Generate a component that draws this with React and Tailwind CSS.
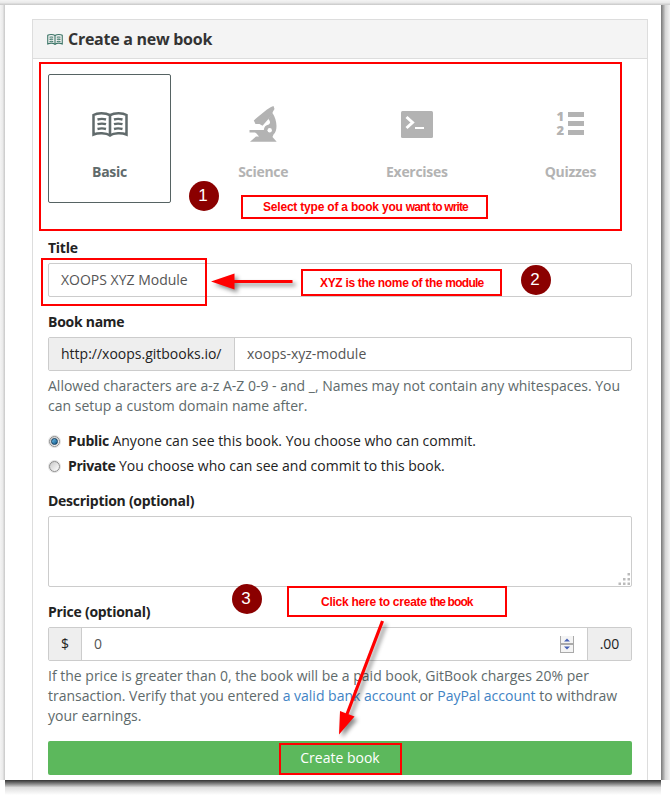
import React from "react";

function BookIcon({ className }) {
  return (
    <svg className={className} viewBox="0 0 36 25" fill="none" stroke="currentColor">
      <path d="M1.500 22.500V3C5 .8 13.500 .6 18 3.200C22.500 .6 31 .8 34.500 3V22.500C30 20.600 22 20.600 18 23.200C14 20.600 6 20.600 1.500 22.500Z" strokeWidth="2.500" />
      <path d="M18 3V24.500" strokeWidth="2.600" />
      <path d="M5.500 7.500Q10 6.300 14 7.500M5.500 12.200Q10 11 14 12.200M5.500 17Q10 15.800 14 17M22 7.500Q26 6.300 30.500 7.500M22 12.200Q26 11 30.500 12.200M22 17Q26 15.800 30.500 17" strokeWidth="2.400" />
    </svg>
  );
}

function MicroscopeIcon() {
  return (
    <svg className="h-[36px] w-[28px]" viewBox="0 0 28 36" fill="currentColor">
      <path d="M22 1L24.500 0L25.500 3L24 5.500L22.500 9.500L13.500 19.800L10.500 18L6.500 18L4.800 14.500L7.500 12L18 3.500Z" />
      <path d="M23.500 7C26 11 27.500 15.500 27.500 20C27.500 24 26.500 26.500 24.500 28.500L23.500 31L27.700 35.800H1L7 30.500H10L7.500 27.500L6 26.500H.5V24H14.800A6 6 0 0 1 19.800 18.500C21.500 17.500 21.500 15 19.300 13Z" />
      <circle cx="20.700" cy="24.200" r="2.200" className="fill-white" />
    </svg>
  );
}

function TerminalIcon() {
  return (
    <svg className="h-[27px] w-[32px]" viewBox="0 0 32 27">
      <rect width="32" height="27" rx="1.500" fill="currentColor" />
      <path d="M5.500 6L11.500 11.500L5.500 17" fill="none" stroke="#fff" strokeWidth="3" />
      <path d="M14 17H23" stroke="#fff" strokeWidth="2" />
    </svg>
  );
}

function ListIcon() {
  return (
    <div className="flex h-[24px] w-[28px] justify-between">
      <div className="flex flex-col font-['Open_Sans',sans-serif] text-[13px] leading-[14px] font-extrabold">
        <span className="-mt-[3px] text-center">1</span>
        <span>2</span>
      </div>
      <div className="flex w-[16px] flex-col justify-between pb-px">
        <span className="h-[5px] bg-current" />
        <span className="h-[5px] bg-current" />
        <span className="h-[5px] bg-current" />
      </div>
    </div>
  );
}

function BookType({ label, active, children }) {
  return (
    <div className={"flex h-[129px] w-[123px] flex-col items-center rounded-[2px] border " + (active ? "border-[#566363] text-[#606a6b]" : "border-transparent text-[#b3b3b3]")}>
      <div className="mt-[29px] flex h-[40px] items-center">{children}</div>
      <div className="mt-[18px] text-[14px] leading-5 font-bold tracking-[-0.3px]">{label}</div>
    </div>
  );
}

function Label({ children }) {
  return <div className="mb-[5px] h-5 font-bold tracking-[-0.27px] text-[#222]">{children}</div>;
}

function Radio({ checked }) {
  return (
    <span className="mt-[5px] mr-2 ml-px flex h-[11px] w-[11px] shrink-0 items-center justify-center rounded-full border border-[#8b8b8b] bg-linear-to-br from-[#c9c9c9] to-white ring-1 ring-[#e2e2e2]">
      {checked && <span className="h-[7px] w-[7px] rounded-full border border-[#123b5c] bg-linear-to-br from-[#6fc0ea] to-[#075a8c]" />}
    </span>
  );
}

function Badge({ className, children }) {
  return (
    <div className={"absolute flex h-[30px] w-[30px] items-center justify-center rounded-full bg-[#8b0000] pr-[2px] pb-px font-['Liberation_Sans',sans-serif] text-[17px] leading-none text-white " + className}>
      {children}
    </div>
  );
}

function Note({ className, children }) {
  return (
    <div className={"absolute flex items-center border-2 border-[#f00] bg-white font-['Liberation_Sans',sans-serif] text-[12px] leading-none font-bold whitespace-pre text-[#f00] " + className}>
      {children}
    </div>
  );
}

export default function App() {
  return (
    <div className="relative flex h-[795px] w-[670px] flex-col overflow-hidden bg-white font-['Open_Sans',sans-serif] text-[14px] leading-5 text-[#222]">
      <div className="h-[5px] shrink-0 bg-linear-to-b from-[#f4f4f4] via-[#eaeaea] to-[#c8c8c8]" />
      <div className="flex h-[775px] shrink-0">
        <div className="w-[5px] bg-linear-to-r from-[#f4f4f4] via-[#ebebeb] to-[#c8c8c8]" />
        <div className="w-[656px] overflow-hidden bg-white pt-[14px] pl-[27px]">
          <div className="h-[780px] w-[616px] border border-[#ddd]">
            <div className="flex h-[39px] items-center border-b border-[#ddd] bg-[#f4f4f4] pl-[14px] text-[16px] font-bold tracking-[-0.27px] text-[#333]">
              <BookIcon className="mr-[5px] h-[11px] w-[16px] text-[#3d7668]" />
              Create a new book
            </div>
            <div className="px-[15px] pt-[15px]">
              <div className="flex justify-between">
                <BookType label="Basic" active><BookIcon className="h-[25px] w-[36px]" /></BookType>
                <BookType label="Science"><MicroscopeIcon /></BookType>
                <BookType label="Exercises"><TerminalIcon /></BookType>
                <BookType label="Quizzes"><ListIcon /></BookType>
              </div>
              <div className="mt-[35px]">
                <Label>Title</Label>
                <div className="flex h-[34px] items-center rounded-[2px] border border-[#ccc] px-3 text-[#555]">XOOPS XYZ Module</div>
              </div>
              <div className="mt-[15px]">
                <Label>Book name</Label>
                <div className="flex h-[34px] rounded-[2px] border border-[#ccc]">
                  <div className="flex w-[186px] items-center border-r border-[#ccc] bg-[#eee] pl-3">http://xoops.gitbooks.io/</div>
                  <div className="flex items-center pl-3 text-[#555]">xoops-xyz-module</div>
                </div>
                <p className="mt-[5px] whitespace-nowrap text-[#606a6b]">
                  Allowed characters are a-z A-Z 0-9 - and _, Names may not contain any whitespaces. You<br />can setup a custom domain name after.
                </p>
              </div>
              <div className="mt-[15px] flex flex-col gap-[5px]">
                <div className="flex whitespace-pre"><Radio checked /><span className="font-bold tracking-[-0.3px]">Public</span> Anyone can see this book. You choose who can commit.</div>
                <div className="flex whitespace-pre"><Radio /><span className="font-bold tracking-[-0.4px]">Private</span> You choose who can see and commit to this book.</div>
              </div>
              <div className="mt-[15px]">
                <Label>Description (optional)</Label>
                <div className="flex h-[71px] items-end justify-end rounded-[2px] border border-[#ccc] p-px">
                  <svg className="h-[12px] w-[12px]" viewBox="0 0 12 12" fill="#bbb">
                    <path d="M9.500 0h2.500v2.500H9.500zM5 5h2.500v2.500H5zM9.500 5h2.500v2.500H9.500zM.5 9.500H3V12H.5zM5 9.500h2.500V12H5zM9.500 9.500H12V12H9.500z" />
                  </svg>
                </div>
              </div>
              <div className="mt-[15px]">
                <Label>Price (optional)</Label>
                <div className="flex h-[34px] items-stretch rounded-[2px] border border-[#ccc]">
                  <div className="flex w-[33px] items-center justify-center border-r border-[#ccc] bg-[#eee]">$</div>
                  <div className="flex flex-1 items-center justify-between pr-[13px] pl-3 text-[#555]">
                    <span>0</span>
                    <svg className="h-[17px] w-[14px]" viewBox="0 0 14 17">
                      <path d="M0 0h14v17H0z" fill="#aaa" />
                      <path d="M1 0h12v7H1zM1 9h12v7H1z" fill="#f4f4f4" />
                      <path d="M4 5.500L7 2.500L10 5.500ZM4 10.500L7 13.500L10 10.500Z" fill="#4863b5" />
                    </svg>
                  </div>
                  <div className="flex w-[44px] items-center justify-center border-l border-[#ccc] bg-[#eee]">.00</div>
                </div>
                <p className="mt-[5px] whitespace-nowrap text-[#606a6b]">
                  If the price is greater than 0, the book will be a paid book, GitBook charges 20% per<br />
                  transaction. Verify that you entered <span className="text-[#4183c4]">a valid bank account</span> or <span className="text-[#4183c4]">PayPal account</span> to withdraw<br />
                  your earnings.
                </p>
              </div>
              <div className="mt-[15px] flex h-[34px] items-center justify-center rounded-[2px] bg-[#5cb85c] text-white">Create book</div>
            </div>
          </div>
        </div>
        <div className="w-[9px] bg-linear-to-r from-[#777] via-[#d6d6d6] via-50% to-[#f2f2f2]" />
      </div>
      <div className="ml-[5px] h-[15px] w-[656px] bg-linear-to-b from-[#333] via-[#dedede] via-50% to-white" />

      <div className="absolute top-[62px] left-[39px] h-[169px] w-[583px] border-2 border-[#f00]" />
      <div className="absolute top-[258px] left-[41px] h-[48px] w-[166px] border-2 border-[#f00]" />
      <div className="absolute top-[743px] left-[279px] h-[32px] w-[123px] border-2 border-[#f00]" />
      <Note className="top-[195px] left-[241px] h-[24px] w-[247px] pl-[20px]">
        <span className="tracking-[-0.2px]">Select type of a book you </span><span className="tracking-[-0.87px]">want to write</span>
      </Note>
      <Note className="top-[269px] left-[301px] h-[27px] w-[201px] pl-[17px]">
        <span className="tracking-[-0.32px]">XYZ is the nome of the </span><span className="tracking-[-0.75px]">module</span>
      </Note>
      <Note className="top-[586px] left-[287px] h-[31px] w-[220px] pl-[32px]">
        <span className="tracking-[-0.25px]">Click here to create </span><span className="tracking-[-0.9px]">the book</span>
      </Note>
      <Badge className="top-[181px] left-[189px]">1</Badge>
      <Badge className="top-[265px] left-[521px]">2</Badge>
      <Badge className="top-[584px] left-[232px]">3</Badge>
      <svg className="absolute top-0 left-0 h-[795px] w-[670px] drop-shadow-[3px_3px_2px_rgba(0,0,0,0.45)]" viewBox="0 0 670 795" fill="#f00">
        <path d="M211 281.500L234.500 273.500V280H292.500V283H234.500V289.500Z" />
        <path d="M339 734.500L340 711L345.700 713.200L381 620.400L384 621.600L348.600 714.300L354.500 716.500Z" />
      </svg>
    </div>
  );
}
